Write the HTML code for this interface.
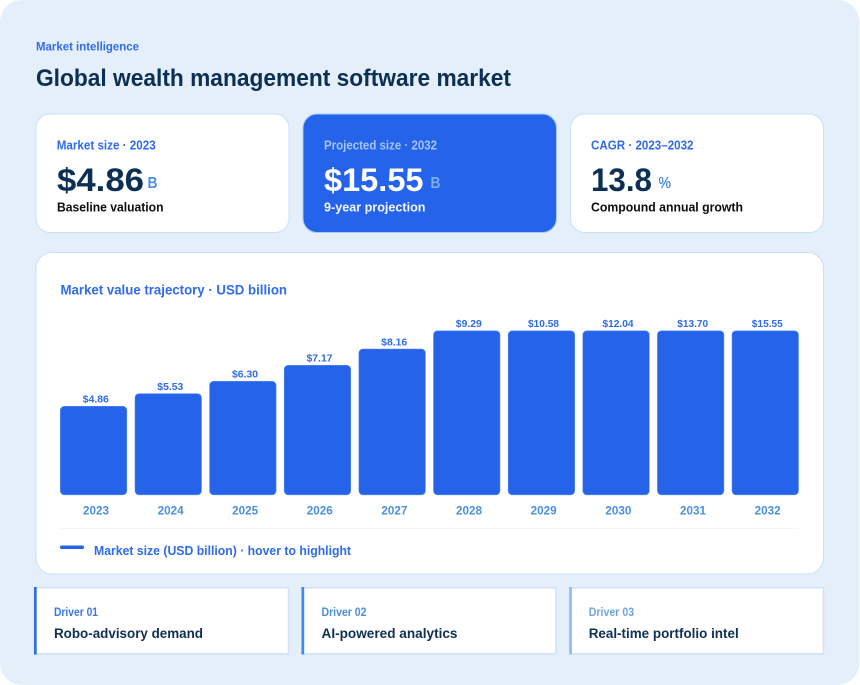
<!DOCTYPE html>
<html lang="en">
<head>
<meta charset="utf-8">
<title>Global wealth management software market</title>
<style>
html,body{margin:0;padding:0;background:#fff;width:860px;height:685px;overflow:hidden}
svg{display:block}
text{font-family:"Liberation Sans",sans-serif;font-weight:700}
.card{fill:#fff;stroke:#c9e0f8;stroke-width:1}
.bar{fill:#2563eb;stroke:#5b8df0;stroke-width:.6}
.val{font-size:10.5px;fill:#2f6bec;text-anchor:middle}
.yr{font-size:11.5px;fill:#4a90e2;text-anchor:middle}
.lab{font-size:12.5px}
.num{font-size:32.5px}
.unit{font-size:16px}
.sub{font-size:13px}
.dl{font-size:11.5px}
.dt{font-size:13.5px;fill:#0f2f54}
</style>
</head>
<body>
<svg width="860" height="685" viewBox="0 0 860 685" xmlns="http://www.w3.org/2000/svg">
<rect x="0" y="0" width="859.5" height="685" rx="22" fill="#e4effa"/>

<text x="36" y="50.500" font-size="12" fill="#2f6bec" textLength="103" lengthAdjust="spacingAndGlyphs">Market intelligence</text>
<text x="36" y="86" font-size="24" fill="#0c2f55" textLength="475" lengthAdjust="spacingAndGlyphs">Global wealth management software market</text>

<rect class="card" x="36" y="114" width="253" height="118.500" rx="14"/>
<text class="lab" x="56.700" y="149.500" fill="#2f6bec" textLength="99" lengthAdjust="spacingAndGlyphs">Market size · 2023</text>
<text class="num" x="57" y="191" fill="#0c2f55" textLength="87" lengthAdjust="spacingAndGlyphs">$4.86</text>
<text class="unit" x="147.500" y="188" fill="#4a90e2" textLength="10" lengthAdjust="spacingAndGlyphs">B</text>
<text class="sub" x="57" y="211.500" fill="#0d0d0d" textLength="106.500" lengthAdjust="spacingAndGlyphs">Baseline valuation</text>

<rect x="303" y="114" width="253.500" height="118.500" rx="14" fill="#2563eb" stroke="#a9c9f5" stroke-width="1"/>
<text class="lab" x="324" y="149.500" fill="#a4c4f6" textLength="113" lengthAdjust="spacingAndGlyphs">Projected size · 2032</text>
<text class="num" x="324" y="191" fill="#ffffff" textLength="99.500" lengthAdjust="spacingAndGlyphs">$15.55</text>
<text class="unit" x="430.500" y="188" fill="#7fadf2" textLength="10" lengthAdjust="spacingAndGlyphs">B</text>
<text class="sub" x="324" y="211.500" fill="#f2f6fe" textLength="101.500" lengthAdjust="spacingAndGlyphs">9-year projection</text>

<rect class="card" x="570.500" y="114" width="253" height="118.500" rx="14"/>
<text class="lab" x="591" y="149.500" fill="#2f6bec" textLength="102.500" lengthAdjust="spacingAndGlyphs">CAGR · 2023–2032</text>
<text class="num" x="591" y="191" fill="#0c2f55" textLength="61" lengthAdjust="spacingAndGlyphs">13.8</text>
<text x="658.500" y="188" font-size="16" style="font-weight:400" fill="#3f8ae6" stroke="#3f8ae6" stroke-width=".25" textLength="12.500" lengthAdjust="spacingAndGlyphs">%</text>
<text class="sub" x="591" y="211.500" fill="#0d0d0d" textLength="152" lengthAdjust="spacingAndGlyphs">Compound annual growth</text>

<rect class="card" x="36" y="252.500" width="787.500" height="321.500" rx="16"/>
<text x="60.500" y="294.500" font-size="13.500" fill="#2f6bec" textLength="226.500" lengthAdjust="spacingAndGlyphs">Market value trajectory · USD billion</text>

<rect class="bar" x="60.300" y="406.300" width="66.500" height="88.500" rx="4"/>
<rect class="bar" x="135" y="393.700" width="66.500" height="101.100" rx="4"/>
<rect class="bar" x="209.600" y="381.300" width="66.500" height="113.500" rx="4"/>
<rect class="bar" x="284.200" y="365.300" width="66.500" height="129.500" rx="4"/>
<rect class="bar" x="358.900" y="349" width="66.500" height="145.800" rx="4"/>
<rect class="bar" x="433.500" y="330.800" width="66.500" height="164" rx="4"/>
<rect class="bar" x="508.200" y="330.800" width="66.500" height="164" rx="4"/>
<rect class="bar" x="582.800" y="330.800" width="66.500" height="164" rx="4"/>
<rect class="bar" x="657.400" y="330.800" width="66.500" height="164" rx="4"/>
<rect class="bar" x="732" y="330.800" width="66.500" height="164" rx="4"/>

<text class="val" x="95.800" y="402.500" textLength="26" lengthAdjust="spacingAndGlyphs">$4.86</text>
<text class="val" x="170.300" y="390" textLength="26" lengthAdjust="spacingAndGlyphs">$5.53</text>
<text class="val" x="245" y="377.500" textLength="26" lengthAdjust="spacingAndGlyphs">$6.30</text>
<text class="val" x="319.500" y="361.500" textLength="26" lengthAdjust="spacingAndGlyphs">$7.17</text>
<text class="val" x="394.200" y="345.300" textLength="26" lengthAdjust="spacingAndGlyphs">$8.16</text>
<text class="val" x="468.800" y="327" textLength="26" lengthAdjust="spacingAndGlyphs">$9.29</text>
<text class="val" x="543.500" y="327" textLength="31" lengthAdjust="spacingAndGlyphs">$10.58</text>
<text class="val" x="618" y="327" textLength="31" lengthAdjust="spacingAndGlyphs">$12.04</text>
<text class="val" x="692.700" y="327" textLength="31" lengthAdjust="spacingAndGlyphs">$13.70</text>
<text class="val" x="767.300" y="327" textLength="31" lengthAdjust="spacingAndGlyphs">$15.55</text>

<text class="yr" x="96" y="514.500" textLength="26" lengthAdjust="spacingAndGlyphs">2023</text>
<text class="yr" x="170.600" y="514.500" textLength="26" lengthAdjust="spacingAndGlyphs">2024</text>
<text class="yr" x="245.200" y="514.500" textLength="26" lengthAdjust="spacingAndGlyphs">2025</text>
<text class="yr" x="319.800" y="514.500" textLength="26" lengthAdjust="spacingAndGlyphs">2026</text>
<text class="yr" x="394.400" y="514.500" textLength="26" lengthAdjust="spacingAndGlyphs">2027</text>
<text class="yr" x="469" y="514.500" textLength="26" lengthAdjust="spacingAndGlyphs">2028</text>
<text class="yr" x="543.600" y="514.500" textLength="26" lengthAdjust="spacingAndGlyphs">2029</text>
<text class="yr" x="618.400" y="514.500" textLength="26" lengthAdjust="spacingAndGlyphs">2030</text>
<text class="yr" x="693" y="514.500" textLength="26" lengthAdjust="spacingAndGlyphs">2031</text>
<text class="yr" x="767.600" y="514.500" textLength="26" lengthAdjust="spacingAndGlyphs">2032</text>

<rect x="60" y="528" width="739" height="1" fill="#f0f6fd"/>
<rect x="60" y="545.500" width="24" height="3.500" rx="1.700" fill="#2563eb"/>
<text x="94" y="555" font-size="12.500" fill="#2f6bec" textLength="257" lengthAdjust="spacingAndGlyphs">Market size (USD billion) · hover to highlight</text>

<rect x="34.500" y="587.800" width="254" height="66" fill="#fff" stroke="#cfe2f8" stroke-width="1.500"/>
<rect x="34" y="587" width="2.700" height="67.500" fill="#2f6fe4"/>
<text class="dl" x="54" y="616" fill="#3b78e6" textLength="44" lengthAdjust="spacingAndGlyphs">Driver 01</text>
<text class="dt" x="54" y="638" textLength="149" lengthAdjust="spacingAndGlyphs">Robo-advisory demand</text>

<rect x="302" y="587.800" width="254" height="66" fill="#fff" stroke="#cfe2f8" stroke-width="1.500"/>
<rect x="301.500" y="587" width="2.700" height="67.500" fill="#3f8ae6"/>
<text class="dl" x="321.500" y="616" fill="#4a90e2" textLength="45" lengthAdjust="spacingAndGlyphs">Driver 02</text>
<text class="dt" x="321.500" y="638" textLength="136" lengthAdjust="spacingAndGlyphs">AI-powered analytics</text>

<rect x="570" y="587.800" width="253.500" height="66" fill="#fff" stroke="#cfe2f8" stroke-width="1.500"/>
<rect x="569.200" y="587" width="2.700" height="67.500" fill="#8fbff0"/>
<text class="dl" x="588.700" y="616" fill="#6ea6dd" textLength="45.500" lengthAdjust="spacingAndGlyphs">Driver 03</text>
<text class="dt" x="588.700" y="638" textLength="150" lengthAdjust="spacingAndGlyphs">Real-time portfolio intel</text>
</svg>
</body>
</html>
